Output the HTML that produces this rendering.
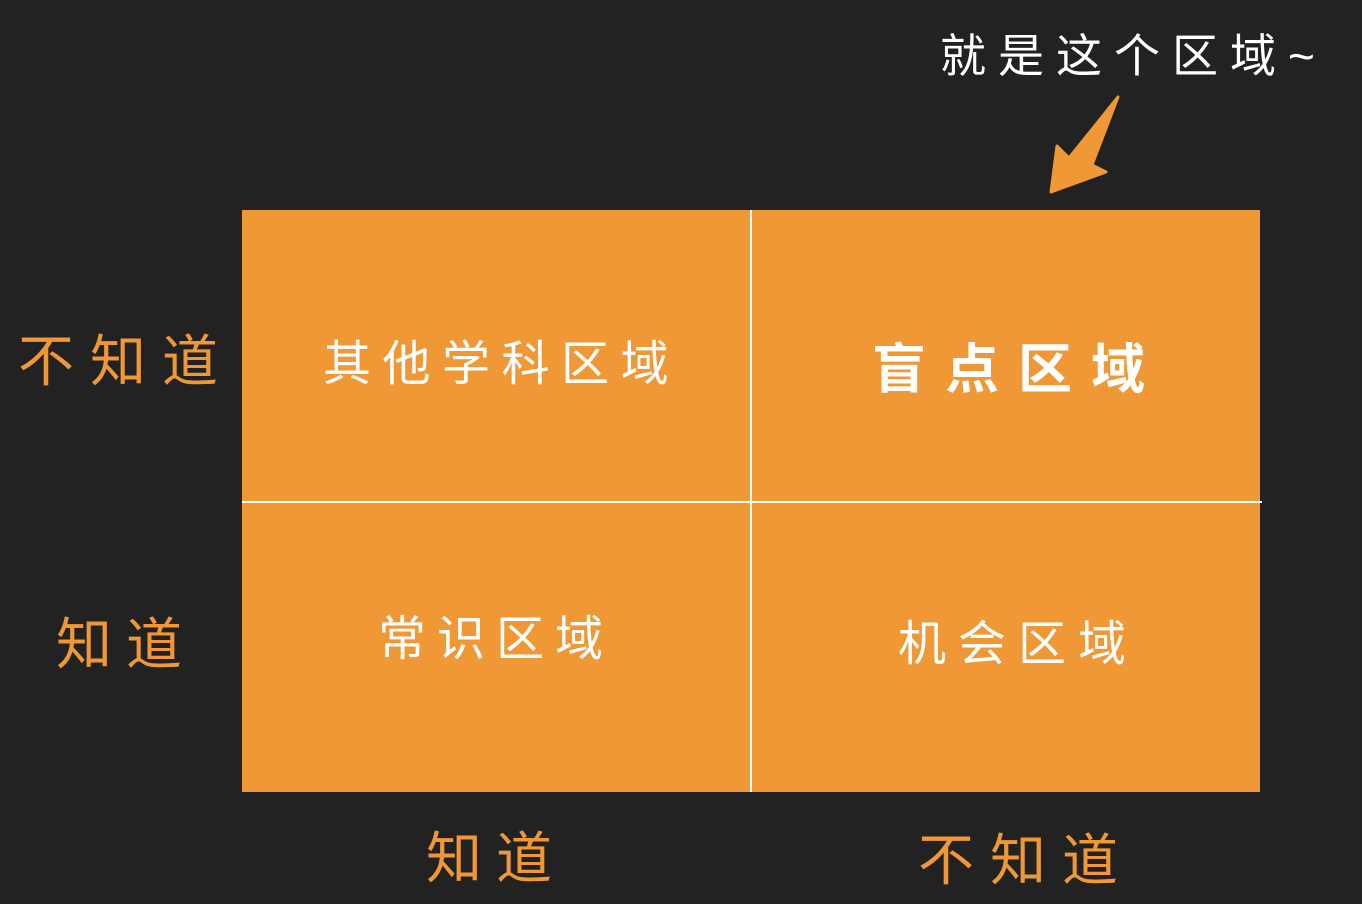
<!DOCTYPE html>
<html><head><meta charset="utf-8"><style>
html,body{margin:0;padding:0}
body{width:1362px;height:904px;background:#222222;position:relative;overflow:hidden;font-family:"Liberation Sans","Noto Sans CJK SC",sans-serif}
.t{position:absolute;white-space:nowrap;line-height:1}
.w{color:#fff}.o{color:#ef9835}
.box{position:absolute;left:242px;top:210px;width:1018px;height:582px;background:#ef9835}
</style></head><body>
<div class="t w" style="left:940px;top:33px;font-size:46px;letter-spacing:12px">就是这个区域~</div>
<svg style="position:absolute;left:0;top:0" width="1362" height="904">
<polygon points="1051,192 1057,146 1069,158 1118,97 1092,165 1106,172" fill="#ef9835" stroke="#ef9835" stroke-linejoin="round" stroke-width="3"/>
</svg>
<div class="box"></div>
<div style="position:absolute;left:750px;top:210px;width:2px;height:582px;background:#fff"></div>
<div style="position:absolute;left:242px;top:501px;width:1020px;height:2px;background:#fff"></div>
<div class="t w" style="left:323px;top:341px;font-size:48px;letter-spacing:11.5px">其他学科区域</div>
<div class="t w" style="left:872px;top:343px;font-size:54px;letter-spacing:19px;font-weight:bold">盲点区域</div>
<div class="t w" style="left:378px;top:616px;font-size:48px;letter-spacing:11px">常识区域</div>
<div class="t w" style="left:898px;top:621px;font-size:48px;letter-spacing:12px">机会区域</div>
<div class="t o" style="left:18px;top:334px;font-size:56px;letter-spacing:16px">不知道</div>
<div class="t o" style="left:56px;top:617px;font-size:56px;letter-spacing:14px">知道</div>
<div class="t o" style="left:426px;top:831px;font-size:56px;letter-spacing:14px">知道</div>
<div class="t o" style="left:918px;top:833px;font-size:56px;letter-spacing:16px">不知道</div>
</body></html>
